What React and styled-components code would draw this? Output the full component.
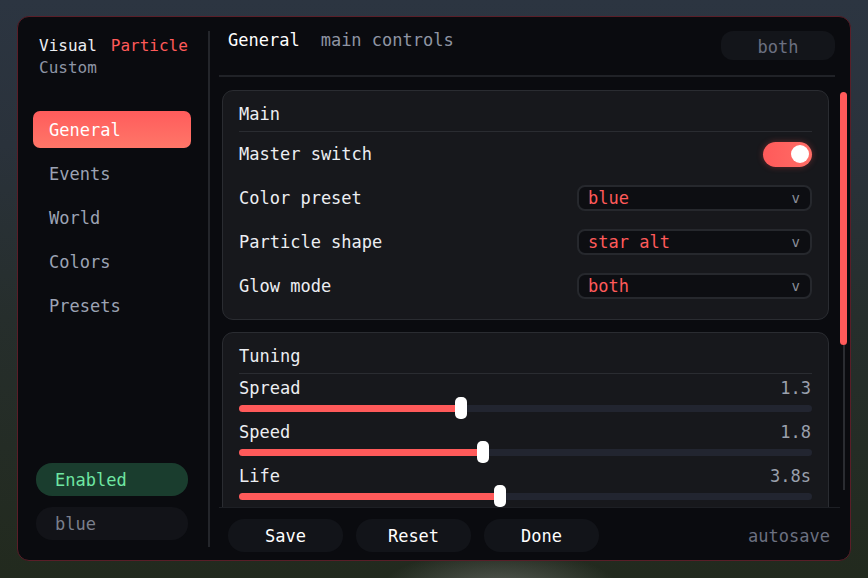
import styled, { createGlobalStyle } from 'styled-components';

const GlobalStyle = createGlobalStyle`
	html, body {
		margin: 0;
		padding: 0;
	}
	body {
		width: 868px;
		height: 578px;
		overflow: hidden;
		font-family: "DejaVu Sans Mono", "Liberation Mono", monospace;
		background:
			radial-gradient(ellipse 120px 40px at 500px 590px, rgba(150, 150, 150, 0.45), transparent),
			linear-gradient(180deg, #2c3541 0%, #2a323b 25%, #262e2c 55%, #222a1e 100%);
	}
`

const Window = styled.div`
	margin: 16px 0 0 17px;
	width: 834px;
	height: 545px;
	box-sizing: border-box;
	border: 1px solid #5a1e28;
	border-radius: 12px;
	background: #0a0b0f;
	display: flex;
	overflow: hidden;
	font-size: 17px;
	color: #eceef2;
`

const Sidebar = styled.div`
	width: 192px;
	box-sizing: border-box;
	margin: 14px 0 13px;
	padding: 4px 17px 7px 15px;
	border-right: 2px solid #24262b;
	display: flex;
	flex-direction: column;
`

const Brand = styled.div`
	padding-left: 6px;
	line-height: 22px;
	font-size: 16px;
`

const BrandAccent = styled.span`
	color: #ff5a5a;
	margin-left: 14px;
`

const BrandSub = styled.div`
	color: #8e95a5;
`

const Nav = styled.div`
	margin-top: 32px;
	display: flex;
	flex-direction: column;
	gap: 7px;
`

const NavItem = styled.div`
	height: 37px;
	border-radius: 7px;
	padding-left: 16px;
	display: flex;
	align-items: center;
	color: ${p => (p.$active ? '#ffffff' : '#9ca3b4')};
	background: ${p => (p.$active ? 'linear-gradient(180deg, #ff5c5c, #ff7668)' : 'transparent')};
`

const SideFooter = styled.div`
	margin-top: auto;
	display: flex;
	flex-direction: column;
	gap: 11px;
	padding: 0 3px;
`

const Pill = styled.div`
	height: 33px;
	border-radius: 16px;
	padding-left: 19px;
	display: flex;
	align-items: center;
	background: ${p => (p.$ok ? '#1a3d2e' : '#121318')};
	color: ${p => (p.$ok ? '#6fe6a2' : '#7a7f8c')};
`

const Main = styled.div`
	flex: 1;
	display: flex;
	flex-direction: column;
	padding-top: 14px;
	padding-left: 9px;
	min-width: 0;
`

const Header = styled.div`
	display: flex;
	align-items: flex-start;
	height: 29px;
	padding: 0 15px 0 9px;
`

const HeaderTitle = styled.div`
	line-height: 18px;
	color: #ffffff;
`

const HeaderSub = styled.div`
	line-height: 18px;
	margin-left: 21px;
	color: #8f95a3;
`

const ModeBadge = styled.div`
	margin-left: auto;
	width: 114px;
	height: 29px;
	border-radius: 12px;
	background: #13151a;
	color: #6b7080;
	display: flex;
	align-items: center;
	justify-content: center;
	padding-top: 2px;
	box-sizing: border-box;
`

const Rule = styled.div`
	height: 2px;
	background: #202227;
	margin: 15px 15px 0 0;
`

const ScrollRegion = styled.div`
	height: 430px;
	display: flex;
	padding-left: 3px;
	overflow: hidden;
`

const Cards = styled.div`
	width: 607px;
	padding-top: 13px;
	display: flex;
	flex-direction: column;
	gap: 12px;
`

const Card = styled.div`
	box-sizing: border-box;
	border: 1px solid #2a2c31;
	border-radius: 11px;
	background: #17181c;
	padding: 13px 16px 11px;
	flex-shrink: 0;
`

const CardTitle = styled.div`
	line-height: 20px;
	color: #eceef2;
`

const CardRule = styled.div`
	height: 1px;
	margin-top: 7px;
	background: #2a2c31;
`

const Row = styled.div`
	height: 44px;
	display: flex;
	align-items: center;
	justify-content: space-between;
`

const Toggle = styled.div`
	width: 49px;
	height: 25px;
	border-radius: 13px;
	background: linear-gradient(90deg, #ff5a5a, #ff6d66);
	box-shadow: 0 0 6px rgba(255, 80, 80, 0.35);
	display: flex;
	align-items: center;
	justify-content: flex-end;
	padding-right: 3px;
	box-sizing: border-box;
`

const Knob = styled.div`
	width: 18px;
	height: 18px;
	border-radius: 50%;
	background: #ffffff;
`

const Select = styled.div`
	width: 235px;
	height: 26px;
	box-sizing: border-box;
	border: 2px solid #26282d;
	border-radius: 8px;
	background: #0d0e12;
	display: flex;
	align-items: center;
	padding: 0 10px 0 9px;
	color: #ff5a5a;
`

const Caret = styled.span`
	margin-left: auto;
	color: #8a8f9a;
	font-size: 14px;
`

const SliderRow = styled.div`
	height: 44px;
	padding-top: 5px;
	box-sizing: border-box;
`

const SliderHead = styled.div`
	display: flex;
	justify-content: space-between;
	line-height: 18px;
	padding-right: 1px;
`

const SliderValue = styled.span`
	color: #9aa0ad;
`

const Track = styled.div`
	position: relative;
	height: 7px;
	margin-top: 8px;
	border-radius: 4px;
	background: #222530;
`

const Fill = styled.div`
	height: 100%;
	border-radius: 4px;
	background: #ff5a5a;
`

const Thumb = styled.div`
	position: absolute;
	top: -8px;
	width: 12px;
	height: 22px;
	margin-left: -6px;
	border-radius: 5px;
	background: #ffffff;
`

const ScrollBar = styled.div`
	width: 7px;
	margin-left: 11px;
	padding-top: 15px;
	display: flex;
	flex-direction: column;
	align-items: center;
`

const ScrollThumb = styled.div`
	width: 7px;
	height: 253px;
	border-radius: 4px;
	background: #ff5a5a;
`

const ScrollTrack = styled.div`
	width: 2px;
	height: 145px;
	background: #2a2c31;
`

const Footer = styled.div`
	border-top: 1px solid #1d1f24;
	margin-right: 10px;
	padding: 11px 10px 8px 9px;
	display: flex;
	align-items: center;
	gap: 13px;
`

const Button = styled.div`
	width: 115px;
	height: 33px;
	border-radius: 16px;
	background: #121419;
	color: #ffffff;
	display: flex;
	align-items: center;
	justify-content: center;
`

const Autosave = styled.div`
	margin-left: auto;
	color: #6b7080;
`

const navItems = ['General', 'Events', 'World', 'Colors', 'Presets'];

const selects = [
	{ label: 'Color preset', value: 'blue' },
	{ label: 'Particle shape', value: 'star alt' },
	{ label: 'Glow mode', value: 'both' },
];

const sliders = [
	{ label: 'Spread', value: '1.3', pos: 0.388 },
	{ label: 'Speed', value: '1.8', pos: 0.425 },
	{ label: 'Life', value: '3.8s', pos: 0.456 },
];

const App = () => {
	return (
		<>
			<GlobalStyle />
			<Window>
				<Sidebar>
					<Brand>
						Visual<BrandAccent>Particle</BrandAccent>
						<BrandSub>Custom</BrandSub>
					</Brand>
					<Nav>
						{navItems.map((n, i) => (
							<NavItem key={n} $active={i === 0}>{n}</NavItem>
						))}
					</Nav>
					<SideFooter>
						<Pill $ok>Enabled</Pill>
						<Pill>blue</Pill>
					</SideFooter>
				</Sidebar>
				<Main>
					<Header>
						<HeaderTitle>General</HeaderTitle>
						<HeaderSub>main controls</HeaderSub>
						<ModeBadge>both</ModeBadge>
					</Header>
					<Rule />
					<ScrollRegion>
						<Cards>
							<Card>
								<CardTitle>Main</CardTitle>
								<CardRule />
								<Row>
									<span>Master switch</span>
									<Toggle><Knob /></Toggle>
								</Row>
								{selects.map(s => (
									<Row key={s.label}>
										<span>{s.label}</span>
										<Select>
											{s.value}
											<Caret>v</Caret>
										</Select>
									</Row>
								))}
							</Card>
							<Card>
								<CardTitle>Tuning</CardTitle>
								<CardRule />
								{sliders.map(s => (
									<SliderRow key={s.label}>
										<SliderHead>
											<span>{s.label}</span>
											<SliderValue>{s.value}</SliderValue>
										</SliderHead>
										<Track>
											<Fill style={{ width: `${s.pos * 100}%` }} />
											<Thumb style={{ left: `${s.pos * 100}%` }} />
										</Track>
									</SliderRow>
								))}
							</Card>
						</Cards>
						<ScrollBar>
							<ScrollThumb />
							<ScrollTrack />
						</ScrollBar>
					</ScrollRegion>
					<Footer>
						<Button>Save</Button>
						<Button>Reset</Button>
						<Button>Done</Button>
						<Autosave>autosave</Autosave>
					</Footer>
				</Main>
			</Window>
		</>
	);
}

export default App;
